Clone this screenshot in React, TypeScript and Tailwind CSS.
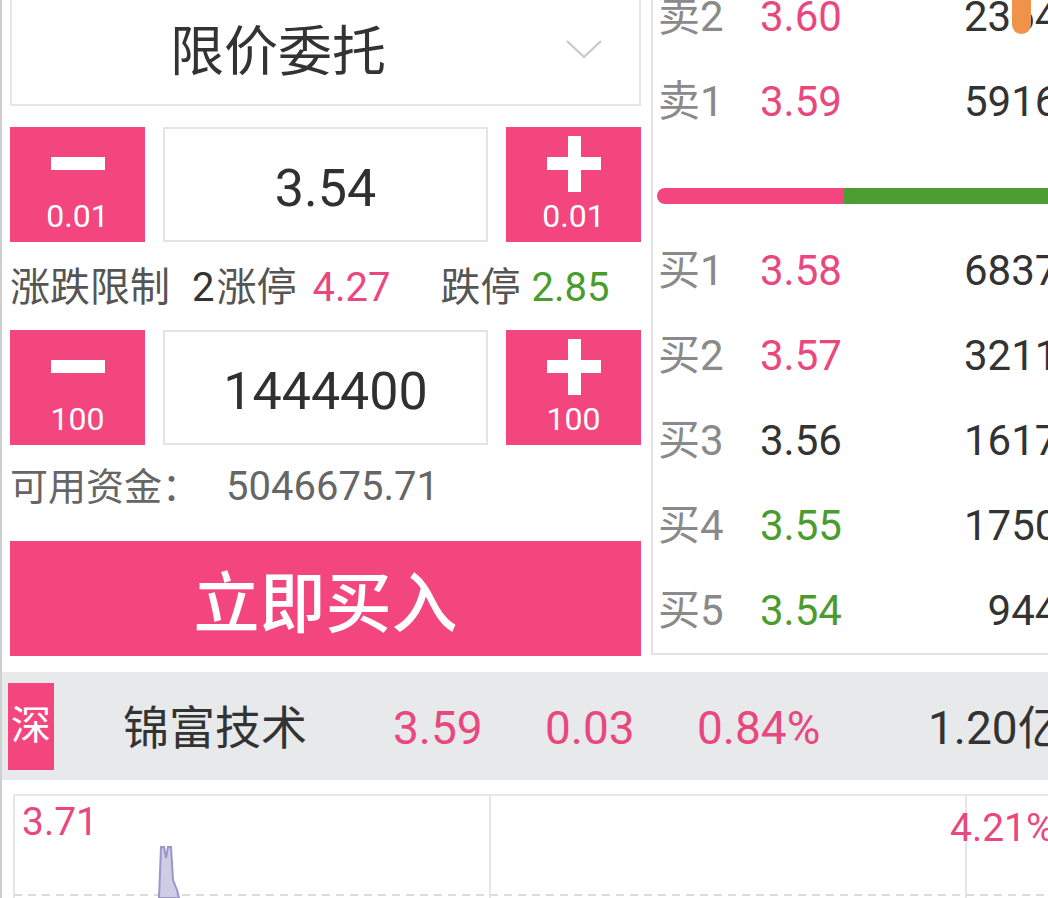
import React from "react";

const PINK_BG = "bg-[#f3467f]";

function StepButton({ plus, label }: { plus: boolean; label: string }) {
  return (
    <div className={`w-[135px] h-full ${PINK_BG} flex flex-col items-center text-white`}>
      {plus ? (
        <div className="relative w-[54px] h-[56px] mt-[9px]">
          <div className="absolute left-0 top-[21px] w-[54px] h-[13px] bg-white" />
          <div className="absolute left-[21px] top-0 w-[13px] h-[56px] bg-white" />
        </div>
      ) : (
        <div className="w-[54px] h-[56px] mt-[8px] flex items-center">
          <div className="w-[54px] h-[13px] bg-white" />
        </div>
      )}
      <div className={`text-[32px] leading-[38px] ${plus ? "mt-[5px]" : "mt-[6px]"}`}>{label}</div>
    </div>
  );
}

function StepRow({ value, step }: { value: string; step: string }) {
  return (
    <div className="flex gap-[18px] h-[115px]">
      <StepButton plus={false} label={step} />
      <div className="w-[325px] h-full border-2 border-[#e4e4e4] flex items-center justify-center pt-[8px] text-[52px] text-[#303030]">
        {value}
      </div>
      <StepButton plus={true} label={step} />
    </div>
  );
}

type BookRow = { label: string; price: string; color: string; vol: string };

function Row({ r }: { r: BookRow }) {
  return (
    <div className="h-[85px] w-[429px] pl-[5px] flex items-center text-[42px]">
      <div className="w-[102px] shrink-0 text-[#8a8a8a]">{r.label}</div>
      <div className={`w-[150px] shrink-0 ${r.color}`}>{r.price}</div>
      <div className="flex-1 text-right text-[#333]">{r.vol}</div>
    </div>
  );
}

export default function App() {
  const pinkText = "text-[#e9487f]";
  const greenText = "text-[#4b9c2f]";
  const sells: BookRow[] = [
    { label: "卖2", price: "3.60", color: pinkText, vol: "23646" },
    { label: "卖1", price: "3.59", color: pinkText, vol: "59163" },
  ];
  const buys: BookRow[] = [
    { label: "买1", price: "3.58", color: pinkText, vol: "68377" },
    { label: "买2", price: "3.57", color: pinkText, vol: "32111" },
    { label: "买3", price: "3.56", color: "text-[#333]", vol: "16177" },
    { label: "买4", price: "3.55", color: greenText, vol: "17500" },
    { label: "买5", price: "3.54", color: greenText, vol: "9446" },
  ];

  return (
    <div className="w-[1048px] h-[898px] overflow-hidden bg-white relative border-l-2 border-[#cfcfcf] font-['Roboto','Noto_Sans_CJK_SC',sans-serif]">
      {/* top section */}
      <div className="flex h-[672px]">
        {/* left column */}
        <div className="w-[649px] shrink-0 pl-[8px] pr-[10px] flex flex-col">
          <div className="mt-[-4px] h-[110px] border-2 border-[#e6e6e6] flex items-center relative">
            <div className="pl-[158px] pt-[4px] text-[54px] text-[#333] leading-none">限价委托</div>
            <svg className="absolute left-[554px] top-[41px]" width="36" height="20" viewBox="0 0 36 20">
              <path d="M1 2 L18 18 L35 2" fill="none" stroke="#c9c9c9" strokeWidth="2.2" />
            </svg>
          </div>

          <div className="mt-[21px]">
            <StepRow value="3.54" step="0.01" />
          </div>

          <div className="h-[88px] flex items-center pt-[4px] text-[40px] whitespace-nowrap">
            <span className="text-[#555]">涨跌限制</span>
            <span className="text-[#333] ml-[22px]">2</span>
            <span className="text-[#555] ml-[2px]">涨停</span>
            <span className={`${pinkText} ml-[16px]`}>4.27</span>
            <span className="text-[#555] ml-[50px]">跌停</span>
            <span className={`${greenText} ml-[11px]`}>2.85</span>
          </div>

          <StepRow value="1444400" step="100" />

          <div className="h-[84px] flex items-center text-[38px] text-[#666] whitespace-nowrap">
            <span>可用资金：</span>
            <span className="ml-[26px] text-[40px]">5046675.71</span>
          </div>

          <div className={`mt-[12px] h-[115px] ${PINK_BG} flex items-center justify-center pt-[12px] text-white text-[66px] font-medium`}>
            立即买入
          </div>
        </div>

        {/* right column: order book */}
        <div className="flex-1 h-[655px] border-l-2 border-b-2 border-[#e2e2e2] overflow-hidden relative">
          <div className="mt-[-26px]">
            {sells.map((r) => (
              <Row key={r.label} r={r} />
            ))}
            <div className="h-[84px] pt-[44px] pl-[4px]">
              <div className="flex h-[16px] w-[420px]">
                <div className="w-[187px] h-full bg-[#f3467f] rounded-l-full" />
                <div className="flex-1 h-full bg-[#4d9e31]" />
              </div>
            </div>
            {buys.map((r) => (
              <Row key={r.label} r={r} />
            ))}
          </div>
        </div>
      </div>

      {/* stock bar */}
      <div className="h-[108px] bg-[#e7e9ea] flex items-center whitespace-nowrap">
        <div className={`ml-[6px] shrink-0 w-[46px] h-[87px] ${PINK_BG} flex items-center justify-center text-white text-[40px]`}>
          深
        </div>
        <div className="ml-[69px] shrink-0 w-[270px] pt-[4px] text-[46px] text-[#333]">锦富技术</div>
        <div className={`shrink-0 w-[152px] pt-[4px] text-[46px] ${pinkText}`}>3.59</div>
        <div className={`shrink-0 w-[152px] pt-[4px] text-[46px] ${pinkText}`}>0.03</div>
        <div className={`shrink-0 w-[231px] pt-[4px] text-[46px] ${pinkText}`}>0.84%</div>
        <div className="shrink-0 pt-[4px] text-[46px] text-[#333]">1.20亿</div>
      </div>

      {/* chart */}
      <div className="h-[118px] relative overflow-hidden">
        <svg className="absolute left-0 top-0" width="1048" height="118" viewBox="0 0 1048 118">
          <line x1="12" y1="15" x2="1048" y2="15" stroke="#e6e6e6" strokeWidth="2" />
          <line x1="12" y1="15" x2="12" y2="118" stroke="#e6e6e6" strokeWidth="2" />
          <line x1="488" y1="15" x2="488" y2="118" stroke="#e6e6e6" strokeWidth="2" />
          <line x1="964" y1="15" x2="964" y2="118" stroke="#e6e6e6" strokeWidth="2" />
          <line x1="12" y1="115" x2="1048" y2="115" stroke="#dcdcdc" strokeWidth="2" strokeDasharray="8 6" />
          <polygon
            points="157,118 159,67 162,67 164,78 166,67 169,67 171,100 175,110 177,118"
            fill="#cfcce6"
            stroke="#9a96c8"
            strokeWidth="2"
          />
        </svg>
        <div className={`absolute left-[20px] top-[18px] text-[39px] leading-[48px] ${pinkText}`}>3.71</div>
        <div className={`absolute left-[948px] top-[24px] text-[39px] leading-[48px] whitespace-nowrap ${pinkText}`}>4.21%</div>
      </div>

      {/* orange floating blob */}
      <div className="absolute left-[1010px] top-0 w-[19px] h-[34px] bg-[#f0924a] rounded-b-full" />
    </div>
  );
}
